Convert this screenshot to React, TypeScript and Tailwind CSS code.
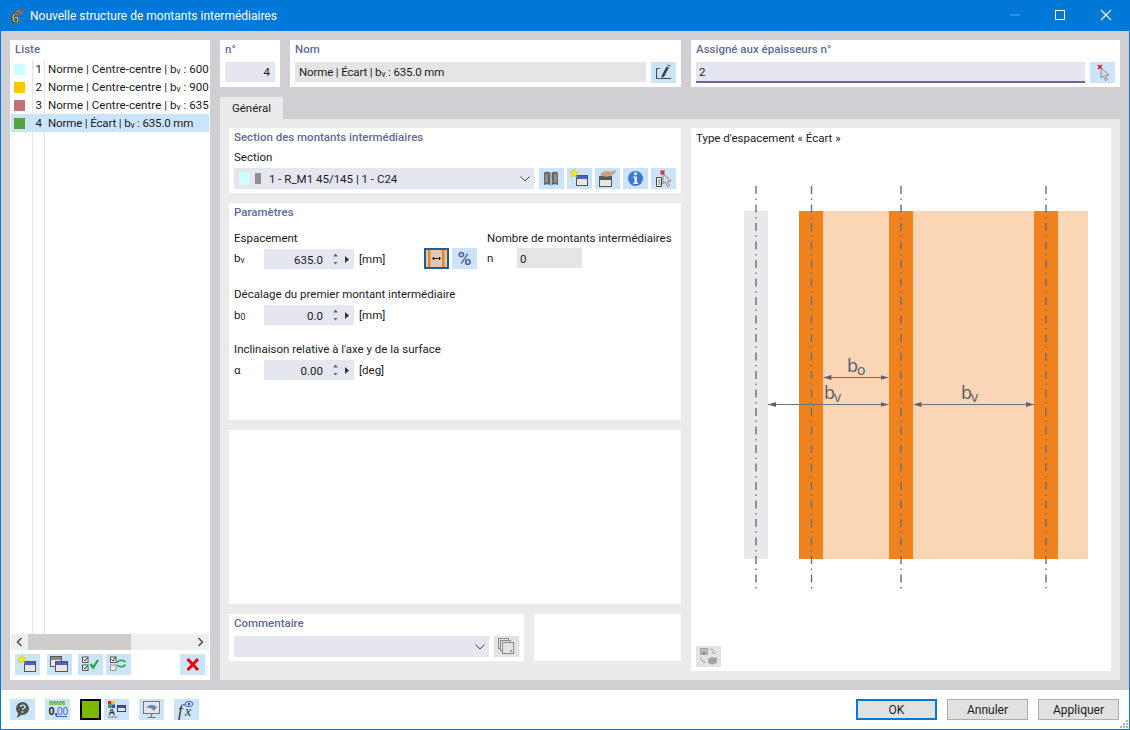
import type { ReactNode } from 'react';

const rows = [
  { id: 1, color: 'bg-[#ccffff]', name: 'Centre-centre', value: '600' },
  { id: 2, color: 'bg-[#ffc800]', name: 'Centre-centre', value: '900' },
  { id: 3, color: 'bg-[#bc7474]', name: 'Centre-centre', value: '635' },
  { id: 4, color: 'bg-[#52a63f]', name: 'Écart', value: '635.0 mm' },
];

function Sub({ children }: { children: ReactNode }) {
  return <span className="text-[8.5px] relative top-[1px]">{children}</span>;
}

function Heading({ children }: { children: ReactNode }) {
  return <div className="font-medium text-[#5f6b98] leading-[16px]">{children}</div>;
}

function IconBtn({ children, gray }: { children: ReactNode; gray?: boolean }) {
  return (
    <div className={`w-[25px] h-[21px] shrink-0 ${gray ? 'bg-[#e3e3e3]' : 'bg-[#cce4f7]'}`}>
      <svg width="25" height="21" viewBox="0 0 25 21" fill="none">
        {children}
      </svg>
    </div>
  );
}

function Star({ x = 7, y = 5.5, r = 4.5 }: { x?: number; y?: number; r?: number }) {
  const pts = Array.from({ length: 10 }, (_, i) => {
    const a = (Math.PI / 5) * i - Math.PI / 2;
    const d = i % 2 ? r * 0.42 : r;
    return `${x + d * Math.cos(a)},${y + d * Math.sin(a)}`;
  }).join(' ');
  return <polygon points={pts} fill="#fff200" stroke="#c9b400" strokeWidth="0.5" />;
}

function Win({ x, y, w, h, bar = '#4a62c4' }: { x: number; y: number; w: number; h: number; bar?: string }) {
  return (
    <g>
      <rect x={x + 0.5} y={y + 0.5} width={w} height={h} fill="#e6e6e6" stroke="#555" />
      <rect x={x + 1} y={y + 1} width={w - 1} height={3} fill={bar} />
    </g>
  );
}

function NewWinIcon() {
  return (
    <IconBtn>
      <Win x={9} y={7} w={11} h={10} />
      <Star />
    </IconBtn>
  );
}

function Spin({ value, unit }: { value: string; unit: string }) {
  return (
    <div className="flex items-center">
      <div className="w-[90px] h-[20px] bg-[#e6e6f0] flex items-center justify-end relative pr-[31px]">
        <span className="relative top-[1px]">{value}</span>
        <svg className="absolute left-[63px] top-0" width="27" height="20" viewBox="0 0 27 20">
          <path d="M6 7.5 L8.5 4.5 L11 7.5 Z" fill="#666" />
          <path d="M6.5 13 L8.5 15.5 L10.5 13 Z" fill="#666" />
          <path d="M18 7 L22 10.5 L18 14 Z" fill="#333" />
        </svg>
      </div>
      <span className="ml-[5px]">{unit}</span>
    </div>
  );
}

function Chevron() {
  return (
    <svg width="10" height="6" viewBox="0 0 10 6" fill="none">
      <path d="M0.5 0.5 L5 5 L9.5 0.5" stroke="#444" strokeWidth="1" />
    </svg>
  );
}

function Diagram() {
  const axes = [756, 811.5, 901, 1046];
  const studs = [799, 889, 1034];
  const ox = 691;
  const oy = 128;
  return (
    <svg width="420" height="490" viewBox={`${ox} ${oy + 20} 420 490`} className="block mt-[2px]">
      <defs>
        <marker id="ah" markerWidth="8" markerHeight="6" refX="8" refY="3" orient="auto-start-reverse">
          <path d="M0 0.5 L8 3 L0 5.5 Z" fill="#5e6070" />
        </marker>
      </defs>
      <rect x="744" y="211" width="24" height="348" fill="#e9e9ec" />
      <rect x="799" y="211" width="289" height="348" fill="#fad6b6" />
      {studs.map((x) => (
        <rect key={x} x={x} y="211" width="24" height="348" fill="#f1831f" />
      ))}
      {axes.map((x) => (
        <line key={x} x1={x} x2={x} y1="186" y2="589" stroke="#6c6c7c" strokeWidth="1.4" strokeDasharray="8 4.5 1.5 4.5" />
      ))}
      <line x1="823.5" x2="888.5" y1="377.5" y2="377.5" stroke="#6f7080" strokeWidth="1" markerStart="url(#ah)" markerEnd="url(#ah)" />
      <line x1="768" x2="888.5" y1="404.5" y2="404.5" stroke="#6f7080" strokeWidth="1" markerStart="url(#ah)" markerEnd="url(#ah)" />
      <line x1="913.5" x2="1034" y1="404.5" y2="404.5" stroke="#6f7080" strokeWidth="1" markerStart="url(#ah)" markerEnd="url(#ah)" />
      <g fill="#5e6070" fontFamily="'Noto Sans', sans-serif">
        <text x="847" y="372" fontSize="18">b</text>
        <text x="857" y="375" fontSize="14">o</text>
        <text x="824" y="399" fontSize="18">b</text>
        <text x="834" y="402" fontSize="14">v</text>
        <text x="961" y="399" fontSize="18">b</text>
        <text x="971" y="402" fontSize="14">v</text>
      </g>
    </svg>
  );
}

export default function App() {
  return (
    <div className="w-[1130px] h-[730px] flex flex-col border border-[#0078d7] border-t-0 text-[11.5px] leading-[16px] text-[#1a1a24] bg-white overflow-hidden" style={{ fontFamily: "Roboto, sans-serif" }}>
      {/* Title bar */}
      <div className="h-[31px] shrink-0 bg-[#0078d7] flex items-center text-white -mx-px">
        <svg className="ml-[8px]" width="18" height="18" viewBox="0 0 18 18">
          <path d="M6 5 L13 1 L17.5 4 L12 9 Z" fill="#5a6470" />
          <path d="M8 4 L15 6 M10.5 2.5 L13.5 7.5" stroke="#8d949c" strokeWidth="0.7" />
          <text x="7.5" y="16" fontSize="14" fontWeight="700" textAnchor="middle" fill="#f5c842" stroke="#2c2c2c" strokeWidth="0.6" fontFamily="'Liberation Sans', sans-serif">6</text>
        </svg>
        <span className="ml-[4px] text-[12px]">Nouvelle structure de montants intermédiaires</span>
        <div className="ml-auto flex items-center">
          <svg width="140" height="31" viewBox="990 0 140 31" fill="none">
            <line x1="1010" x2="1020" y1="15" y2="15" stroke="#5ea8e6" strokeWidth="1" />
            <rect x="1055.5" y="10.5" width="9" height="9" stroke="#fff" strokeWidth="1" />
            <path d="M1101 10 L1111 20 M1111 10 L1101 20" stroke="#fff" strokeWidth="1.1" />
          </svg>
        </div>
      </div>

      {/* Body */}
      <div className="h-[659px] shrink-0 bg-[#d0cfd4] pt-[9px] pb-[10px] px-[9px] flex gap-[10px]">
        {/* Liste */}
        <div className="w-[200px] bg-white flex flex-col">
          <div className="px-[5px] h-[20px] flex items-center pb-[2px]"><Heading>Liste</Heading></div>
          <div className="flex-1 relative pl-px pr-px">
            <div className="absolute left-[22px] top-0 bottom-0 w-px bg-[#e4e4e4]" />
            <div className="absolute left-[34px] top-0 bottom-0 w-px bg-[#e4e4e4]" />
            {rows.map((r) => (
              <div key={r.id} className={`h-[18px] flex items-center relative whitespace-nowrap overflow-hidden ${r.id === 4 ? 'bg-[#cce4fb]' : ''}`}>
                <div className={`w-[11px] h-[11px] ml-[3px] shrink-0 ${r.color}`} />
                <span className="w-[17px] text-right shrink-0">{r.id}</span>
                <span className={`ml-[6px] ${r.id === 4 ? 'tracking-[-0.15px]' : 'tracking-[0.05px]'}`}>Norme | {r.name} | b<Sub>v</Sub> : {r.value}</span>
              </div>
            ))}
          </div>
          <div className="h-[16px] mx-px bg-[#efefef] flex items-center justify-between relative">
            <div className="absolute left-[17px] w-[103px] top-0 bottom-0 bg-[#cdcdcd]" />
            <svg className="ml-[5px] relative" width="7" height="10" viewBox="0 0 7 10" fill="none"><path d="M5.5 1 L1.5 5 L5.5 9" stroke="#555" strokeWidth="1.6" /></svg>
            <svg className="mr-[5px]" width="7" height="10" viewBox="0 0 7 10" fill="none"><path d="M1.5 1 L5.5 5 L1.5 9" stroke="#555" strokeWidth="1.6" /></svg>
          </div>
          <div className="h-[30px] flex items-start pt-[4px] pl-[5px] pr-[5px]">
            <NewWinIcon />
            <div className="ml-[7px]">
              <IconBtn>
                <Win x={3} y={2} w={11} h={10} bar="#8a8a8a" />
                <Win x={8} y={7} w={12} h={10} />
              </IconBtn>
            </div>
            <div className="ml-[6px]">
              <IconBtn>
                <rect x="4.5" y="3" width="5.5" height="5.5" fill="#fff" stroke="#555" />
                <rect x="4.5" y="11" width="5.5" height="5.5" fill="#fff" stroke="#555" />
                <path d="M5.5 5.5 L7 7 L9.5 3.5 M5.5 13.5 L7 15 L9.5 11.5" stroke="#222" strokeWidth="1" />
                <path d="M12.5 10 L15 13.5 L20 6" stroke="#1fa63c" strokeWidth="2.2" />
              </IconBtn>
            </div>
            <div className="ml-[3px]">
              <IconBtn>
                <rect x="4.5" y="3" width="5.5" height="5.5" fill="#fff" stroke="#555" />
                <rect x="4.5" y="11" width="5.5" height="5.5" fill="#e8e8e8" stroke="#999" />
                <path d="M5.5 5.5 L7 7 L9.5 3.5" stroke="#222" strokeWidth="1" />
                <path d="M11 8.5 C13 5.5 17 5.5 19.5 8 M19.5 10.5 C17.5 13.5 13.5 13.5 11 11" stroke="#1fa63c" strokeWidth="1.5" />
              </IconBtn>
            </div>
            <div className="ml-auto">
              <IconBtn>
                <path d="M7.5 5 L18 16 M18 5 L7.5 16" stroke="#f0000a" strokeWidth="3" />
              </IconBtn>
            </div>
          </div>
        </div>

        {/* Right side */}
        <div className="flex-1 flex flex-col min-w-0">
          <div className="h-[47px] flex gap-[10px] shrink-0">
            <div className="w-[60px] bg-white px-[5px] pt-[1px]">
              <Heading>n°</Heading>
              <div className="mt-[5px] h-[20px] bg-[#e6e6f0] flex items-center justify-end pr-[5px]">4</div>
            </div>
            <div className="w-[391px] bg-white px-[5px] pt-[1px]">
              <Heading>Nom</Heading>
              <div className="mt-[5px] flex gap-[5px]">
                <div className="flex-1 h-[20px] bg-[#e5e5e5] flex items-center px-[4px]"><span className="tracking-[-0.15px]">Norme | Écart | b<Sub>v</Sub> : 635.0 mm</span></div>
                <IconBtn>
                  <path d="M8.5 6.5 H5.5 V16.5 H8.5 M9 16.5 H20" stroke="#444" strokeWidth="1" />
                  <path d="M10.5 14 L15.5 4.5 L18 5.5 L13 15 L10.5 15.5 Z" fill="#444" />
                  <path d="M16.5 3 L19.5 4" stroke="#444" strokeWidth="1" />
                </IconBtn>
              </div>
            </div>
            <div className="flex-1 bg-white px-[5px] pt-[1px]">
              <Heading>Assigné aux épaisseurs n°</Heading>
              <div className="mt-[5px] flex gap-[5px]">
                <div className="flex-1 h-[21px] bg-[#e6e6f0] border-b-2 border-[#6464a8] flex items-center px-[3px]">2</div>
                <IconBtn>
                  <path d="M8 3 L12 7 M12 3 L8 7" stroke="#e0102a" strokeWidth="1.6" />
                  <path d="M11 6 L11 16 L13.5 14 L15.5 18.5 L17.5 17.5 L15.5 13.5 L19 13 Z" fill="#dcdcdc" stroke="#777" strokeWidth="0.8" />
                </IconBtn>
              </div>
            </div>
          </div>

          <div className="mt-[10px] h-[22px] w-[63px] bg-[#ebebeb] flex items-center justify-center shrink-0">Général</div>

          <div className="flex-1 bg-[#ebebeb] p-[9px] flex gap-[10px] min-h-0">
            <div className="w-[452px] flex flex-col gap-[10px] pb-[10px]">
              <div className="h-[65px] bg-white px-[5px] pt-[1px] shrink-0">
                <Heading>Section des montants intermédiaires</Heading>
                <div className="mt-[4px]">Section</div>
                <div className="mt-[3px] flex">
                  <div className="w-[300px] h-[21px] bg-[#e6e6f0] flex items-center pl-[5px]">
                    <div className="w-[10px] h-[13px] bg-[#ccffff]" />
                    <div className="w-[6px] h-[11px] bg-[#8f8f8f] ml-[6px]" />
                    <span className="ml-[8px]">1 - R_M1 45/145 | 1 - C24</span>
                    <div className="ml-auto mr-[4px] flex"><Chevron /></div>
                  </div>
                  <div className="ml-[5px] flex gap-[3px]">
                    <IconBtn>
                      <path d="M12 5 C9.5 3.5 7 3.5 5 4.5 V17 C7 16 9.5 16 12 17.5 C14.5 16 17 16 19 17 V4.5 C17 3.5 14.5 3.5 12 5 Z" fill="#666" />
                      <path d="M12 5 V17.5" stroke="#cce4f7" strokeWidth="1.2" />
                      <path d="M7.5 6 V14.5 M16.5 6 V14.5" stroke="#8d8d8d" strokeWidth="3" />
                    </IconBtn>
                    <NewWinIcon />
                    <IconBtn>
                      <Win x={4} y={8} w={12} h={10} bar="#555" />
                      <path d="M5 7 C7 3 13 2 16 4 L20 2 L21 4 L16 8 C12 9 8 9 5 7 Z" fill="#c9a184" />
                    </IconBtn>
                    <IconBtn>
                      <circle cx="12.5" cy="10.5" r="7.5" fill="#3f76d8" />
                      <rect x="11.2" y="4.5" width="2.6" height="2.6" fill="#fff" />
                      <path d="M10.5 8.5 H13.8 V14.5 H15 V16 H10.5 V14.5 H11.5 V10 H10.5 Z" fill="#fff" />
                    </IconBtn>
                    <IconBtn>
                      <path d="M9.5 2.5 L13.5 6.5 M13.5 2.5 L9.5 6.5" stroke="#e0102a" strokeWidth="1.6" />
                      <path d="M5.5 9.5 H10.5 V18.5 H5.5 Z" fill="#fff" stroke="#444" />
                      <path d="M7 12 H9.5 M7 14 H9.5 M7 16 H9.5" stroke="#444" strokeWidth="0.8" />
                      <path d="M12 6 L12 16 L14.5 14 L16.5 18.5 L18.5 17.5 L16.5 13.5 L20 13 Z" fill="#dcdcdc" stroke="#777" strokeWidth="0.8" />
                    </IconBtn>
                  </div>
                </div>
              </div>

              <div className="h-[217px] bg-white px-[5px] pt-[1px] shrink-0 flex">
                <div className="w-[253px] shrink-0">
                  <Heading>Paramètres</Heading>
                  <div className="mt-[10px]">Espacement</div>
                  <div className="mt-[2px] flex items-center">
                    <div className="w-[30px]">b<Sub>v</Sub></div>
                    <Spin value="635.0" unit="[mm]" />
                    <div className="ml-auto flex gap-[3px] mr-[10px]">
                      <div className="w-[25px] h-[21px] bg-[#dcc8b4] border-2 border-[#1f5f94] flex items-center justify-center">
                        <svg width="21" height="17" viewBox="0 0 21 17" fill="none">
                          <rect x="2" y="0" width="2.5" height="17" fill="#f1831f" />
                          <rect x="16" y="0" width="2.5" height="17" fill="#f1831f" />
                          <path d="M6.5 8.5 H14.5 M8 7 L6.5 8.5 L8 10 M13 7 L14.5 8.5 L13 10" stroke="#222" strokeWidth="1" />
                        </svg>
                      </div>
                      <div className="w-[25px] h-[21px] bg-[#cce4f7] flex items-center justify-center font-medium text-[19px] text-[#55589c]">%</div>
                    </div>
                  </div>
                  <div className="mt-[17px]">Décalage du premier montant intermédiaire</div>
                  <div className="mt-[3px] flex items-center">
                    <div className="w-[30px]">b<Sub>0</Sub></div>
                    <Spin value="0.0" unit="[mm]" />
                  </div>
                  <div className="mt-[16px]">Inclinaison relative à l'axe y de la surface</div>
                  <div className="mt-[3px] flex items-center">
                    <div className="w-[30px]">α</div>
                    <Spin value="0.00" unit="[deg]" />
                  </div>
                </div>
                <div className="flex-1 whitespace-nowrap">
                  <div className="mt-[26px]">Nombre de montants intermédiaires</div>
                  <div className="mt-[2px] flex items-center">
                    <div className="w-[30px]">n</div>
                    <div className="w-[65px] h-[20px] bg-[#e5e5e5] flex items-center pl-[3px]"><span className="relative top-[1px]">0</span></div>
                  </div>
                </div>
              </div>

              <div className="flex-1 bg-white" />

              <div className="h-[47px] flex gap-[10px] shrink-0">
                <div className="w-[295px] bg-white px-[5px] pt-[1px]">
                  <Heading>Commentaire</Heading>
                  <div className="mt-[5px] flex gap-[5px]">
                    <div className="flex-1 h-[21px] bg-[#e6e6f0] flex items-center justify-end pr-[4px]"><Chevron /></div>
                    <IconBtn gray>
                      <rect x="4.5" y="2.5" width="10" height="10" fill="none" stroke="#8a8a8a" />
                      <rect x="6.5" y="4.5" width="10" height="10" fill="#e3e3e3" stroke="#8a8a8a" />
                      <rect x="8.5" y="6.5" width="11" height="11" fill="#e3e3e3" stroke="#8a8a8a" />
                      <rect x="16" y="14" width="2" height="2" fill="#999" />
                    </IconBtn>
                  </div>
                </div>
                <div className="flex-1 bg-white" />
              </div>
            </div>

            <div className="flex-1 bg-white relative pl-[5px] pt-[2px]">
              <div>Type d'espacement « Écart »</div>
              <div className="-ml-[5px]"><Diagram /></div>
              <div className="absolute left-[5px] bottom-[4px]">
                <IconBtn gray>
                  <rect x="4.5" y="2.5" width="7" height="6" fill="#bdbdbd" stroke="#a5a5a5" />
                  <path d="M5.5 8 L8 5 L10.5 8 Z" fill="#8f8f8f" />
                  <path d="M14 3 C17 3 18 5 18 8 M18 8 L16.5 6.5 M18 8 L19.5 6.5 M5 11 C5 14 6 16 9 16 M9 16 L7.5 14.5 M9 16 L7.5 17.5" stroke="#a5a5a5" strokeWidth="1" />
                  <path d="M12 13 L16 11 L21 12 V17 L16 18.5 L12 17 Z" fill="#a5a5a5" />
                </IconBtn>
              </div>
            </div>
          </div>
        </div>
      </div>

      {/* Footer */}
      <div className="flex-1 bg-white flex items-center pl-[9px] pr-[10px] relative">
        <IconBtn>
          <circle cx="12.5" cy="9.5" r="6.5" fill="#555" />
          <path d="M8 14 L7 19 L12 15.5 Z" fill="#555" />
          <path d="M10.5 8 C10.5 5.5 15 5.5 15 8 C15 9.5 12.5 9.5 12.5 11" stroke="#cce4f7" strokeWidth="1.4" />
          <rect x="11.7" y="12.2" width="1.6" height="1.6" fill="#cce4f7" />
        </IconBtn>
        <div className="ml-[10px]">
          <IconBtn>
            <rect x="4" y="2" width="16" height="4" fill="#8cc46a" />
            <path d="M6.5 2 V4 M9.5 2 V4 M12.5 2 V4 M15.5 2 V4 M18.5 2 V4" stroke="#5f9a40" strokeWidth="0.8" />
            <text x="3.5" y="16" fontSize="11" fontWeight="700" fill="#222" fontFamily="'Liberation Sans', sans-serif">0,</text>
            <text x="12" y="16" fontSize="10" fill="#3f62c0" fontFamily="'Liberation Sans', sans-serif">00</text>
            <path d="M11 17.5 H22" stroke="#3f62c0" strokeWidth="1" />
          </IconBtn>
        </div>
        <div className="ml-[10px] w-[21px] h-[21px] bg-[#7cb800] border-2 border-black" />
        <div className="ml-[3px]">
          <IconBtn>
            <rect x="4" y="2" width="3.5" height="3.5" fill="#e02020" />
            <rect x="7.5" y="2" width="3.5" height="3.5" fill="#e8d020" />
            <rect x="4" y="5.5" width="3.5" height="3.5" fill="#30a040" />
            <rect x="7.5" y="5.5" width="3.5" height="3.5" fill="#3050c0" />
            <text x="4.5" y="16" fontSize="9" fontWeight="700" fill="#222" fontFamily="'Liberation Sans', sans-serif">A</text>
            <path d="M4.5 18 H6.5 M7.5 18 H9.5 M10.5 18 H12.5" stroke="#444" strokeWidth="1" />
            <rect x="13.5" y="6.5" width="8" height="6" fill="#e8e8e8" stroke="#444" />
            <rect x="14" y="7" width="7" height="2" fill="#3050c0" />
          </IconBtn>
        </div>
        <div className="ml-[10px]">
          <IconBtn>
            <rect x="4.5" y="2.5" width="16" height="12" fill="#e4e8ee" stroke="#777" />
            <path d="M7 9 C10 5 14 5 18 8 L15 12 C13 9 10 8 7 9 Z" fill="#6f8aa8" />
            <path d="M12.5 15 V18 M8.5 18.5 H16.5" stroke="#777" strokeWidth="1.2" />
          </IconBtn>
        </div>
        <div className="ml-[10px]">
          <IconBtn>
            <text x="4" y="16.5" fontSize="17" fontStyle="italic" fill="#333" fontFamily="'Liberation Serif', serif">f</text>
            <text x="11" y="17" fontSize="14" fontStyle="italic" fill="#333" fontFamily="'Liberation Serif', serif">x</text>
            <ellipse cx="15" cy="5" rx="4" ry="2.6" fill="#cfe0fa" stroke="#4a62c4" strokeWidth="1" />
            <circle cx="15" cy="5" r="1.2" fill="#3050a8" />
          </IconBtn>
        </div>
        <div className="ml-auto flex gap-[10px] text-[12px]">
          <div className="w-[81px] h-[21px] bg-[#e1e1e1] border-2 border-[#0078d7] flex items-center justify-center">OK</div>
          <div className="w-[81px] h-[21px] bg-[#e1e1e1] border border-[#adadad] flex items-center justify-center">Annuler</div>
          <div className="w-[81px] h-[21px] bg-[#e1e1e1] border border-[#adadad] flex items-center justify-center">Appliquer</div>
        </div>
        <svg className="absolute right-0 bottom-0" width="9" height="9" viewBox="0 0 9 9">
          <path d="M6 0h2v2H6z M3 3h2v2H3z M6 3h2v2H6z M0 6h2v2H0z M3 6h2v2H3z M6 6h2v2H6z" fill="#b5b5b5" />
        </svg>
      </div>
    </div>
  );
}
